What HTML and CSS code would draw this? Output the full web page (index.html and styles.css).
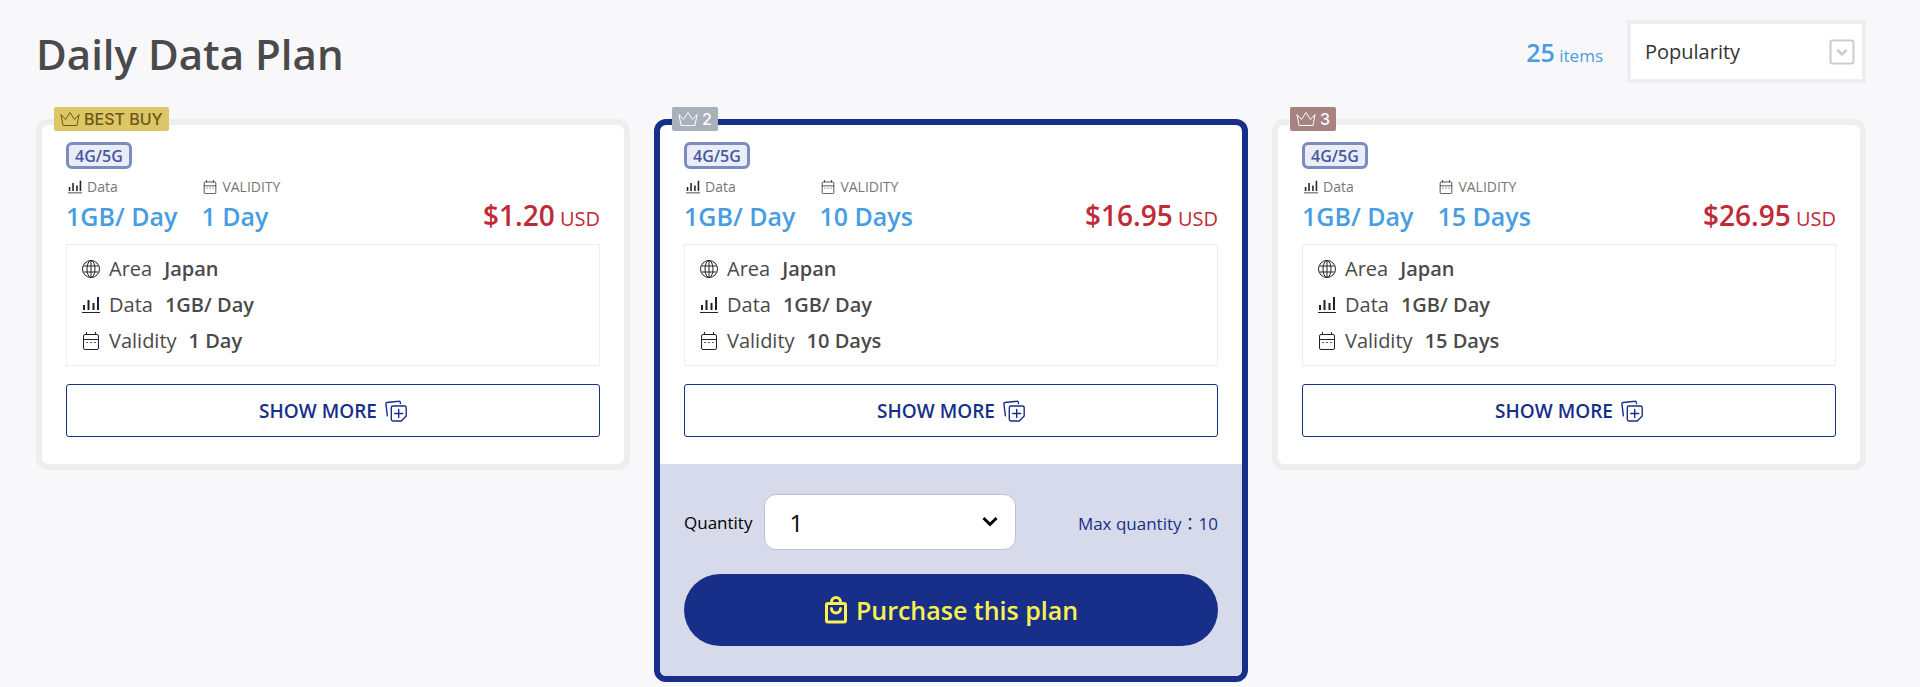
FILE: index.html
```html
<!DOCTYPE html>
<html lang="en">
<head>
    <meta charset="UTF-8">
    <meta name="viewport" content="width=device-width, initial-scale=1.0">
    <title>Daily Data Plan</title>
    <link rel="stylesheet" href="styles.css">
</head>
<body>
    <svg class="sprite" aria-hidden="true">
        <symbol id="icon-crown" viewBox="0 0 20 16">
            <path d="M1 3.500l2 11h14l2-11-4.500 5L10 1.500 5.500 8.500z" fill="none" stroke="currentColor" stroke-linejoin="round"/>
        </symbol>
        <symbol id="icon-data" viewBox="0 0 18 18">
            <path d="M0 16.500h18" stroke="currentColor" fill="none"/>
            <path d="M2 14V9M6.500 14V4M11.500 14V7M16 14V1" stroke="currentColor" stroke-width="2" fill="none"/>
        </symbol>
        <symbol id="icon-calendar" viewBox="0 0 18 18">
            <rect x="1.500" y="2.500" width="15" height="15" rx="1.500" fill="none" stroke="currentColor"/>
            <path d="M1.500 7.500h15M4.500 0v3M13.500 0v3" fill="none" stroke="currentColor"/>
            <path d="M4 10.500h2M8 10.500h2M12 10.500h2" fill="none" stroke="currentColor" opacity=".7"/>
        </symbol>
        <symbol id="icon-globe" viewBox="0 0 18 18">
            <g fill="none" stroke="currentColor">
                <circle cx="9" cy="9" r="8.500"/>
                <ellipse cx="9" cy="9" rx="4" ry="8.500"/>
                <path d="M1.500 6h15M1.500 12h15M9 .5v17"/>
            </g>
        </symbol>
        <symbol id="icon-more" viewBox="0 0 22 22">
            <g fill="none" stroke="currentColor" stroke-width="1.400" stroke-linecap="round" stroke-linejoin="round">
                <path d="M15.500 3.500l-.3-1.300c-.1-.8-.6-1.100-1.300-1L2 2.500c-.8.1-1.200.6-1.100 1.300l1.500 12"/>
                <path d="M8 6h11.500c1 0 1.700.7 1.700 1.700V16l-5 5H8c-1 0-1.700-.7-1.700-1.700V7.700C6.300 6.700 7 6 8 6z"/>
                <path d="M13.700 9.500v8M9.700 13.500h8"/>
            </g>
        </symbol>
        <symbol id="icon-bag" viewBox="0 0 24 28">
            <g fill="none" stroke="currentColor" stroke-width="3">
                <rect x="2.500" y="7.500" width="19" height="18.500" rx="1.500"/>
                <path d="M7.500 7.500V6a4.500 4.500 0 0 1 9 0v1.500"/>
                <path d="M7.500 12.500a4.500 4.500 0 0 0 9 0" stroke-linecap="round"/>
            </g>
        </symbol>
        <symbol id="icon-box-arrow" viewBox="0 0 26 26">
            <rect x="1.500" y="1.500" width="23" height="23" rx="2" fill="none" stroke="currentColor" stroke-width="2"/>
            <path d="M9 11.500l4 4 4-4" fill="none" stroke="currentColor" stroke-width="2.500" stroke-linecap="round" stroke-linejoin="round"/>
        </symbol>
        <symbol id="icon-arrow" viewBox="0 0 16 11">
            <path d="M1.500 1.500L8 8l6.500-6.500" fill="none" stroke="currentColor" stroke-width="3"/>
        </symbol>
    </svg>

    <header class="page-header">
        <h1>Daily Data Plan</h1>
        <div class="toolbar">
            <p class="count"><strong>25</strong> items</p>
            <div class="select-wrap sort">
                <select aria-label="Sort by">
                    <option>Popularity</option>
                    <option>Price</option>
                </select>
                <svg><use href="#icon-box-arrow"/></svg>
            </div>
        </div>
    </header>

    <main class="plans">
        <article class="plan">
            <span class="rank gold"><svg><use href="#icon-crown"/></svg>BEST BUY</span>
            <div class="plan-body">
                <span class="network">4G/5G</span>
                <div class="summary">
                    <div class="item">
                        <span class="item-label"><svg><use href="#icon-data"/></svg>Data</span>
                        <span class="item-value">1GB/ Day</span>
                    </div>
                    <div class="item">
                        <span class="item-label"><svg><use href="#icon-calendar"/></svg>VALIDITY</span>
                        <span class="item-value">1 Day</span>
                    </div>
                    <p class="price"><strong>$1.20</strong> USD</p>
                </div>
                <ul class="details">
                    <li><svg><use href="#icon-globe"/></svg>Area<strong>Japan</strong></li>
                    <li><svg><use href="#icon-data"/></svg>Data<strong>1GB/ Day</strong></li>
                    <li><svg><use href="#icon-calendar"/></svg>Validity<strong>1 Day</strong></li>
                </ul>
                <button class="show-more" type="button">SHOW MORE<svg><use href="#icon-more"/></svg></button>
            </div>
        </article>

        <article class="plan selected">
            <span class="rank silver"><svg><use href="#icon-crown"/></svg>2</span>
            <div class="plan-body">
                <span class="network">4G/5G</span>
                <div class="summary">
                    <div class="item">
                        <span class="item-label"><svg><use href="#icon-data"/></svg>Data</span>
                        <span class="item-value">1GB/ Day</span>
                    </div>
                    <div class="item">
                        <span class="item-label"><svg><use href="#icon-calendar"/></svg>VALIDITY</span>
                        <span class="item-value">10 Days</span>
                    </div>
                    <p class="price"><strong>$16.95</strong> USD</p>
                </div>
                <ul class="details">
                    <li><svg><use href="#icon-globe"/></svg>Area<strong>Japan</strong></li>
                    <li><svg><use href="#icon-data"/></svg>Data<strong>1GB/ Day</strong></li>
                    <li><svg><use href="#icon-calendar"/></svg>Validity<strong>10 Days</strong></li>
                </ul>
                <button class="show-more" type="button">SHOW MORE<svg><use href="#icon-more"/></svg></button>
            </div>
            <form class="order">
                <div class="order-row">
                    <label for="quantity">Quantity</label>
                    <div class="select-wrap quantity">
                        <select id="quantity">
                            <option>1</option>
                            <option>2</option>
                            <option>3</option>
                        </select>
                        <svg><use href="#icon-arrow"/></svg>
                    </div>
                    <span class="max">Max quantity：10</span>
                </div>
                <button class="purchase" type="button"><svg><use href="#icon-bag"/></svg>Purchase this plan</button>
            </form>
        </article>

        <article class="plan">
            <span class="rank bronze"><svg><use href="#icon-crown"/></svg>3</span>
            <div class="plan-body">
                <span class="network">4G/5G</span>
                <div class="summary">
                    <div class="item">
                        <span class="item-label"><svg><use href="#icon-data"/></svg>Data</span>
                        <span class="item-value">1GB/ Day</span>
                    </div>
                    <div class="item">
                        <span class="item-label"><svg><use href="#icon-calendar"/></svg>VALIDITY</span>
                        <span class="item-value">15 Days</span>
                    </div>
                    <p class="price"><strong>$26.95</strong> USD</p>
                </div>
                <ul class="details">
                    <li><svg><use href="#icon-globe"/></svg>Area<strong>Japan</strong></li>
                    <li><svg><use href="#icon-data"/></svg>Data<strong>1GB/ Day</strong></li>
                    <li><svg><use href="#icon-calendar"/></svg>Validity<strong>15 Days</strong></li>
                </ul>
                <button class="show-more" type="button">SHOW MORE<svg><use href="#icon-more"/></svg></button>
            </div>
        </article>
    </main>
</body>
</html>
```
FILE: styles.css
```css
* {
    box-sizing: border-box;
}
body {
    margin: 0;
    padding: 20px 54px 0 36px;
    background-color: #f8f8fb;
    color: #4a4a4a;
    font-family: "Open Sans", "Noto Sans CJK JP", sans-serif;
    font-size: 18px;
}
h1, p, ul {
    margin: 0;
    padding: 0;
}
strong {
    font-weight: 600;
}
button, select {
    font-family: inherit;
    cursor: pointer;
}
.sprite {
    display: none;
}
.page-header {
    display: flex;
    justify-content: space-between;
    align-items: center;
    height: 63px;
    margin-bottom: 36px;
}
.page-header h1 {
    padding-top: 4px;
    font-size: 42px;
    line-height: 60px;
    font-weight: 600;
}
.toolbar {
    display: flex;
    align-items: center;
    gap: 24px;
}
.count {
    color: #489de2;
    font-size: 17px;
}
.count strong {
    font-size: 25px;
}
.select-wrap {
    position: relative;
}
.select-wrap select {
    appearance: none;
    width: 100%;
    background-color: #fff;
}
.select-wrap svg {
    position: absolute;
    top: 50%;
    transform: translateY(-50%);
    pointer-events: none;
}
.sort {
    width: 239px;
}
.sort select {
    height: 63px;
    padding: 0 14px;
    border: 4px solid #eee;
    border-radius: 0;
    color: #333;
    font-size: 20px;
}
.sort svg {
    right: 11px;
    width: 26px;
    height: 26px;
    color: #ccc;
}
.plans {
    display: grid;
    grid-template-columns: repeat(3, 1fr);
    align-items: start;
    gap: 24px;
}
.plan {
    position: relative;
    background-color: #fff;
    border: 6px solid #eee;
    border-radius: 12px;
}
.plan.selected {
    border-color: #172f88;
}
.rank {
    position: absolute;
    top: -18px;
    left: 12px;
    display: flex;
    align-items: center;
    gap: 4px;
    height: 24px;
    padding: 0 6px;
    border-radius: 2px;
    color: #fff;
    font-family: Inter, sans-serif;
    font-size: 16px;
    font-weight: 500;
}
.rank svg {
    width: 20px;
    height: 16px;
}
.rank.gold {
    background-color: #dcc665;
    color: #6c5915;
}
.rank.silver {
    background-color: #a7b0bb;
}
.rank.bronze {
    background-color: #a68380;
}
.plan-body {
    display: flex;
    flex-direction: column;
    padding: 17px 24px 27px;
}
.network {
    align-self: flex-start;
    height: 27px;
    padding: 0 6px;
    border: 3px solid #7c8bc0;
    border-radius: 6px;
    background-color: #eaedf5;
    color: #4357a0;
    font-size: 16px;
    line-height: 22px;
    font-weight: 600;
}
.summary {
    display: flex;
    align-items: last baseline;
    gap: 24px;
    margin: 6px 0 8px;
}
.item {
    display: flex;
    flex-direction: column;
}
.item-label {
    display: flex;
    align-items: center;
    gap: 5px;
    padding-left: 2px;
    color: #777;
    font-size: 14px;
    line-height: 24px;
}
.item-label svg {
    width: 14px;
    height: 14px;
    color: #222;
}
.item-value {
    color: #489de2;
    font-size: 25px;
    line-height: 34px;
    font-weight: 600;
}
.price {
    margin-left: auto;
    color: #bf2a37;
    font-size: 20px;
    line-height: 34px;
}
.price strong {
    font-size: 28px;
}
.details {
    list-style: none;
    padding: 6px 15px;
    border: 1px solid #eee;
}
.details li {
    display: flex;
    align-items: center;
    font-size: 20px;
    line-height: 36px;
}
.details svg {
    width: 18px;
    height: 18px;
    margin-right: 9px;
    color: #222;
}
.details strong {
    margin-left: 12px;
}
.show-more {
    display: flex;
    justify-content: center;
    align-items: center;
    gap: 8px;
    height: 53px;
    margin-top: 18px;
    border: 1px solid #172f88;
    border-radius: 3px;
    background-color: #fff;
    color: #172f88;
    font-size: 19px;
    font-weight: 600;
}
.show-more svg {
    width: 22px;
    height: 22px;
}
.order {
    padding: 30px 24px;
    border-radius: 0 0 6px 6px;
    background-color: #d7daea;
}
.order-row {
    display: flex;
    align-items: center;
    gap: 12px;
    margin-bottom: 24px;
    color: #000;
    font-size: 17px;
}
.quantity {
    width: 252px;
}
.quantity select {
    height: 56px;
    padding: 0 24px;
    border: 1px solid #b9c0dc;
    border-radius: 12px;
    color: #000;
    font-size: 24px;
}
.quantity svg {
    right: 18px;
    width: 16px;
    height: 11px;
}
.max {
    margin-left: auto;
    color: #172f88;
}
.purchase {
    display: flex;
    justify-content: center;
    align-items: center;
    gap: 8px;
    width: 100%;
    height: 72px;
    border: none;
    border-radius: 36px;
    background-color: #172f88;
    color: #faf150;
    font-size: 25px;
    font-weight: 600;
}
.purchase svg {
    width: 24px;
    height: 28px;
}
```
